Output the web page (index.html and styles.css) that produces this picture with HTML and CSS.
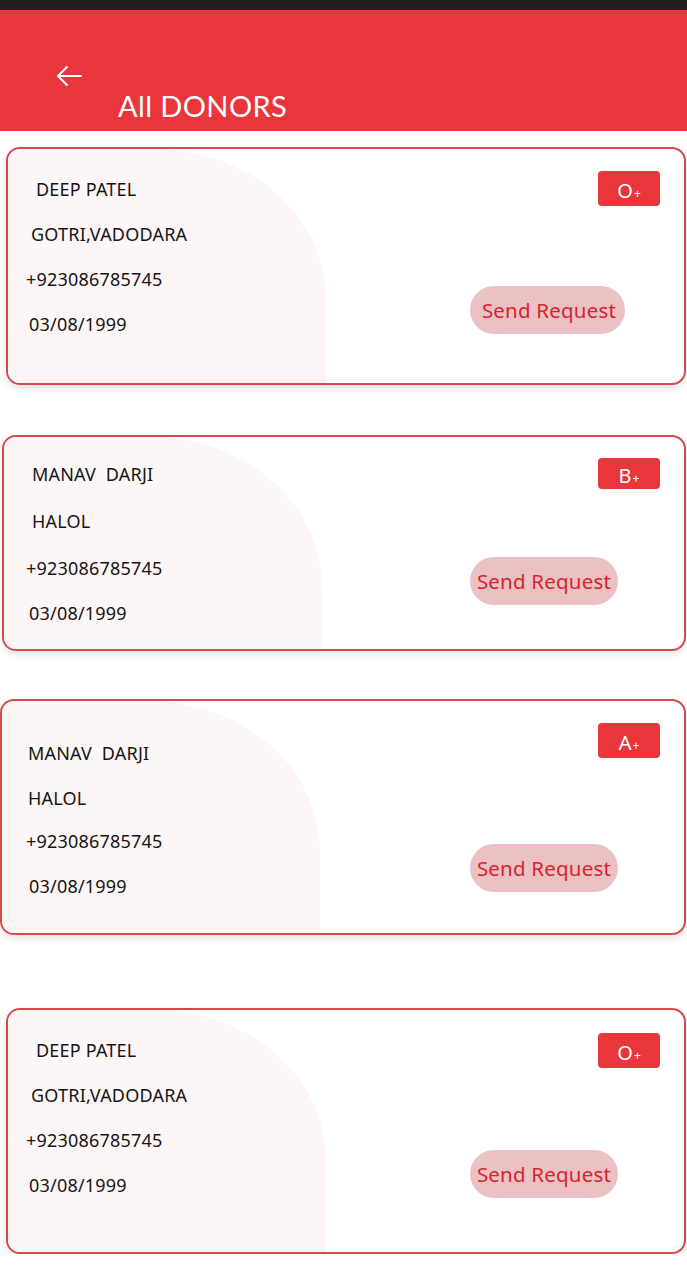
FILE: index.html
```html
<!DOCTYPE html>
<html>
<head>
<meta charset="utf-8">
<link rel="stylesheet" href="styles.css">
</head>
<body>
<div class="statusbar"></div>
<header class="appbar">
  <svg class="back" width="28" height="22" viewBox="0 0 28 22" aria-hidden="true">
    <path d="M26 11H3M12 2L3 11l9 9" fill="none" stroke="#fff" stroke-width="2.2" stroke-linecap="round" stroke-linejoin="round"/>
  </svg>
  <h1 class="title">All DONORS</h1>
</header>

<main class="list">
  <section class="card card-1">
    <div class="blob"></div>
    <div class="info">
      <div class="line p28">DEEP PATEL</div>
      <div class="line p23">GOTRI,VADODARA</div>
      <div class="line p18">+923086785745</div>
      <div class="line p21">03/08/1999</div>
    </div>
    <div class="side">
      <span class="badge">O<small>+</small></span>
      <button class="req wide">Send Request</button>
    </div>
  </section>

  <section class="card card-2">
    <div class="blob"></div>
    <div class="info">
      <div class="line p28">MANAV&nbsp; DARJI</div>
      <div class="line p28">HALOL</div>
      <div class="line p22">+923086785745</div>
      <div class="line p25">03/08/1999</div>
    </div>
    <div class="side">
      <span class="badge short">B<small>+</small></span>
      <button class="req">Send Request</button>
    </div>
  </section>

  <section class="card card-3">
    <div class="blob"></div>
    <div class="info">
      <div class="line p26">MANAV&nbsp; DARJI</div>
      <div class="line p26">HALOL</div>
      <div class="line p24">+923086785745</div>
      <div class="line p27">03/08/1999</div>
    </div>
    <div class="side">
      <span class="badge">A<small>+</small></span>
      <button class="req">Send Request</button>
    </div>
  </section>

  <section class="card card-4">
    <div class="blob"></div>
    <div class="info">
      <div class="line p28">DEEP PATEL</div>
      <div class="line p23">GOTRI,VADODARA</div>
      <div class="line p18">+923086785745</div>
      <div class="line p21">03/08/1999</div>
    </div>
    <div class="side">
      <span class="badge">O<small>+</small></span>
      <button class="req">Send Request</button>
    </div>
  </section>
</main>
</body>
</html>
```

FILE: styles.css
```css
* { box-sizing: border-box; }
html, body { margin: 0; padding: 0; background: #fff; }
body {
  width: 687px;
  font-family: "Noto Sans", "Open Sans", sans-serif;
  color: #151515;
}

.statusbar { height: 10px; background: #1f2021; }

.appbar {
  height: 121px;
  background: #e9363a;
  display: flex;
  flex-direction: column;
  padding-top: 55px;
}
.back { display: block; margin-left: 55px; }
.title {
  margin: 3px 0 0 118px;
  font-family: "Lato", "Noto Sans", sans-serif;
  font-weight: 400;
  font-size: 29px;
  line-height: 32px;
  color: #fff;
  letter-spacing: 0.4px;
}

.list { display: flex; flex-direction: column; }

.card {
  position: relative;
  display: flex;
  justify-content: space-between;
  margin-right: 1px;
  border: 2px solid #d64a4c;
  border-radius: 14px;
  background: #fff;
  overflow: hidden;
  box-shadow: 0 4px 8px rgba(0,0,0,0.10);
}
.blob {
  position: absolute;
  left: 0; top: 0; bottom: 0;
  width: 318px;
  background: #fdf6f6;
  border-radius: 0 170px 0 0 / 0 150px 0 0;
}
.card-1 { margin-top: 16px; margin-left: 6px; height: 238px; }
.card-2 { margin-top: 50px; margin-left: 2px; height: 216px; }
.card-3 { margin-top: 48px; margin-left: 0; height: 236px; }
.card-4 { margin-top: 73px; margin-left: 6px; height: 246px; }

.info {
  position: relative;
  display: flex;
  flex-direction: column;
  padding-top: 18px;
}
.card-2 .info { padding-top: 15px; }
.card-3 .info { padding-top: 30px; }
.card-3 .line:nth-child(2) { margin-bottom: -2px; }
.card-2 .line:nth-child(1), .card-2 .line:nth-child(2) { margin-bottom: 2px; }

.line {
  font-size: 18px;
  line-height: 45px;
  letter-spacing: 0.2px;
  white-space: nowrap;
}
.p18 { padding-left: 18px; }
.p21 { padding-left: 21px; }
.p22 { padding-left: 22px; }
.p23 { padding-left: 23px; }
.p24 { padding-left: 24px; }
.p25 { padding-left: 25px; }
.p26 { padding-left: 26px; }
.p27 { padding-left: 27px; }
.p28 { padding-left: 28px; }

.side {
  position: relative;
  width: 214px;
  display: flex;
  flex-direction: column;
  align-items: flex-start;
  padding-top: 22px;
}
.card-2 .side { padding-top: 21px; }
.card-3 .side { padding-top: 22px; }
.card-4 .side { padding-top: 23px; }

.badge {
  align-self: flex-end;
  margin-right: 24px;
  width: 62px;
  height: 35px;
  border-radius: 4px;
  background: #e9363a;
  color: #fff;
  font-size: 20px;
  line-height: 35px;
  text-align: center;
  padding-top: 2px;
}
.badge.short { height: 31px; line-height: 31px; }
.badge small { font-size: 12px; margin-left: 1px; }

.req {
  margin-top: 80px;
  height: 48px;
  width: 148px;
  border: 0;
  border-radius: 24px;
  background: #ebc1c3;
  color: #d8232b;
  font-family: "Noto Sans", "Open Sans", sans-serif;
  font-size: 20.5px;
  letter-spacing: 0.2px;
  padding: 0;
  text-align: center;
  white-space: nowrap;
}
.req.wide { width: 155px; padding-left: 3px; }
.card-2 .req { margin-top: 68px; }
.card-3 .req { margin-top: 86px; }
.card-4 .req { margin-top: 82px; }
```
